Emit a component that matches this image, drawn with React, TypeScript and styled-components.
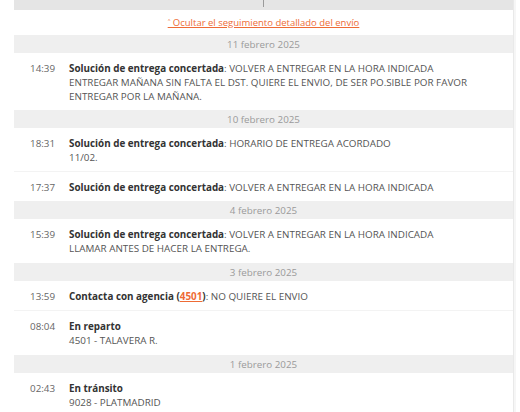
import React from "react";
import styled, { createGlobalStyle } from "styled-components";

const Global = createGlobalStyle`
  html, body { margin: 0; padding: 0; background: #fff; }
  body { font-family: "Open Sans", "Noto Sans", sans-serif; }
`;

const Page = styled.div`
  width: 520px;
  height: 412px;
  overflow: hidden;
  position: relative;
  background: #fff;
`;

const Panel = styled.div`
  margin-left: 14px;
  width: 499px;
  border-right: 1px solid #e9e9e9;
  box-shadow: 2px 0 0 #f6f6f6;
`;

const TopBar = styled.div`
  height: 10px;
  background: #e5e5e5;
  display: flex;
  justify-content: center;
  &::after {
    content: "";
    width: 1px;
    height: 7px;
    background: #9a9a9a;
  }
`;

const LinkRow = styled.div`
  height: 25px;
  display: flex;
  align-items: center;
  justify-content: center;
`;

const ToggleLink = styled.a`
  color: #ee6b35;
  font-size: 9.5px;
  text-decoration: underline;
  text-underline-offset: 1px;
  cursor: pointer;
`;

const DateBar = styled.div`
  height: 18px;
  background: #efefef;
  color: #9a9a9a;
  font-size: 9.8px;
  display: flex;
  align-items: center;
  justify-content: center;
`;

const Row = styled.div<{ $last?: boolean; $tall?: boolean }>`
  display: grid;
  grid-template-columns: 39px 1fr;
  padding: 8px 16px ${(p) => (p.$tall ? "8px" : "7px")} 16px;
  font-size: 9.85px;
  line-height: 14px;
  color: #555;
  border-bottom: ${(p) => (p.$last ? "none" : "1px solid #f3f3f3")};
`;

const Time = styled.div`
  color: #666;
`;

const Body = styled.div`
  color: #555;
`;

const Label = styled.b`
  color: #333;
  font-weight: 700;
`;

const Agency = styled.a`
  color: #ee6b35;
  font-weight: 700;
  text-decoration: underline;
`;

type Ev = { time: string; tall?: boolean; content: React.ReactNode };
type Group = { date: string; events: Ev[] };

const groups: Group[] = [
  {
    date: "11 febrero 2025",
    events: [
      {
        time: "14:39",
        content: (
          <>
            <Label>Solución de entrega concertada</Label>: VOLVER A ENTREGAR EN LA HORA INDICADA
            <br />
            ENTREGAR MAÑANA SIN FALTA EL DST. QUIERE EL ENVIO, DE SER PO.SIBLE POR FAVOR
            <br />
            ENTREGAR POR LA MAÑANA.
          </>
        ),
      },
    ],
  },
  {
    date: "10 febrero 2025",
    events: [
      {
        time: "18:31",
        content: (
          <>
            <Label>Solución de entrega concertada</Label>: HORARIO DE ENTREGA ACORDADO
            <br />
            11/02.
          </>
        ),
      },
      {
        time: "17:37",
        content: (
          <>
            <Label>Solución de entrega concertada</Label>: VOLVER A ENTREGAR EN LA HORA INDICADA
          </>
        ),
      },
    ],
  },
  {
    date: "4 febrero 2025",
    events: [
      {
        time: "15:39",
        tall: true,
        content: (
          <>
            <Label>Solución de entrega concertada</Label>: VOLVER A ENTREGAR EN LA HORA INDICADA
            <br />
            LLAMAR ANTES DE HACER LA ENTREGA.
          </>
        ),
      },
    ],
  },
  {
    date: "3 febrero 2025",
    events: [
      {
        time: "13:59",
        content: (
          <>
            <Label>
              Contacta con agencia (<Agency>4501</Agency>)
            </Label>
            : NO QUIERE EL ENVIO
          </>
        ),
      },
      {
        time: "08:04",
        tall: true,
        content: (
          <>
            <Label>En reparto</Label>
            <br />
            4501 - TALAVERA R.
          </>
        ),
      },
    ],
  },
  {
    date: "1 febrero 2025",
    events: [
      {
        time: "02:43",
        content: (
          <>
            <Label>En tránsito</Label>
            <br />
            9028 - PLATMADRID
          </>
        ),
      },
    ],
  },
];

export default function App() {
  return (
    <Page>
      <Global />
      <Panel>
        <TopBar />
        <LinkRow>
          <ToggleLink>˄ Ocultar el seguimiento detallado del envío</ToggleLink>
        </LinkRow>
        {groups.map((g) => (
          <React.Fragment key={g.date}>
            <DateBar>{g.date}</DateBar>
            {g.events.map((e, i) => (
              <Row key={e.time} $tall={e.tall} $last={i === g.events.length - 1}>
                <Time>{e.time}</Time>
                <Body>{e.content}</Body>
              </Row>
            ))}
          </React.Fragment>
        ))}
      </Panel>
    </Page>
  );
}
